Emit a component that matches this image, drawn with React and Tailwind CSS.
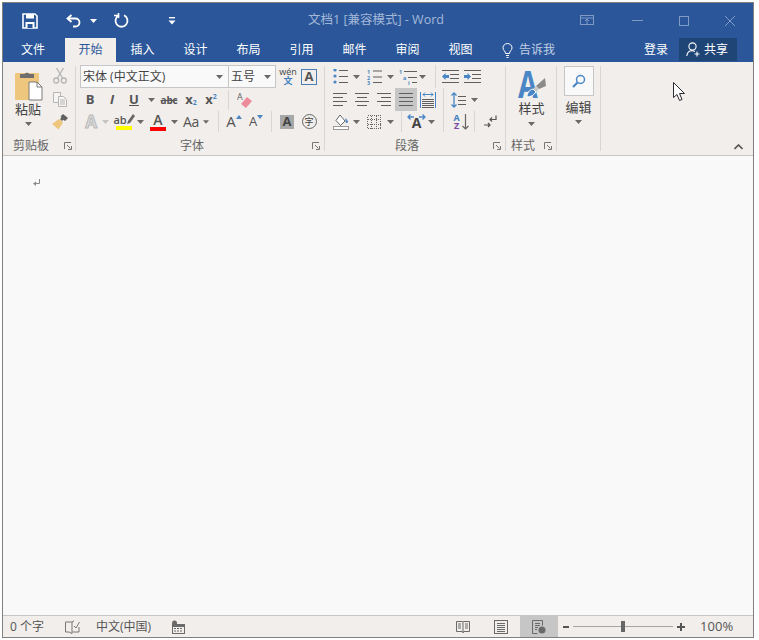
import React from "react";

const gray = "#5f5f5f";
const blue = "#4a86c5";

function Caret({ className = "", color = "#6a6a6a" }) {
  return (
    <span className={`flex shrink-0 items-center justify-center ${className}`}>
      <svg width="7" height="4" viewBox="0 0 7 4">
        <path d="M0 0h7L3.5 4z" fill={color} />
      </svg>
    </span>
  );
}

function Slot({ className = "", children }) {
  return <span className={`flex shrink-0 items-center justify-center ${className}`}>{children}</span>;
}

function VLine({ className = "" }) {
  return <span className={`w-px shrink-0 self-stretch bg-[#d8d6d4] ${className}`} />;
}

function Launcher({ className = "" }) {
  return (
    <svg className={`shrink-0 ${className}`} width="8" height="8" viewBox="0 0 8 8" fill="none" stroke="#777">
      <path d="M.5 7V.5H7" />
      <path d="M3 3l3.5 3.5M7.5 4v3.5H4" />
    </svg>
  );
}

function GroupLabel({ w, children, ml }) {
  return (
    <div className="flex h-[18px] items-center">
      <span className={`text-center text-[12px] text-[#666] ${w}`}>{children}</span>
      <Launcher className={ml} />
    </div>
  );
}

function Lines({ rows, w = 15, h = 13, stroke = gray }) {
  // rows: [x1, x2] pairs spaced evenly
  const step = rows.length > 1 ? (h - 1) / (rows.length - 1) : 0;
  return (
    <svg width={w} height={h} viewBox={`0 0 ${w} ${h}`}>
      {rows.map((r, i) => (
        <rect key={i} x={r[0]} y={Math.round(i * step)} width={r[1] - r[0]} height="1" fill={stroke} />
      ))}
    </svg>
  );
}

function SaveIcon() {
  return (
    <svg width="16" height="16" viewBox="0 0 16 16" fill="none">
      <path d="M1 1h12l2 2v12H1z" stroke="#fff" strokeWidth="1.6" />
      <rect x="4" y="1" width="8" height="4.5" fill="#fff" />
      <rect x="3.5" y="9" width="9" height="6" fill="#fff" />
      <rect x="5.5" y="11" width="5" height="4" fill="#2b579a" />
    </svg>
  );
}

function UndoIcon() {
  return (
    <svg width="15" height="14" viewBox="0 0 15 14" fill="none" stroke="#fff" strokeWidth="1.8">
      <path d="M5.5 1L1.5 4.5 5.5 8" />
      <path d="M2 4.5h7.5a3.8 3.8 0 0 1 0 8H7" />
    </svg>
  );
}

function RepeatIcon() {
  return (
    <svg width="15" height="15" viewBox="0 0 15 15" fill="none" stroke="#fff" strokeWidth="1.8">
      <path d="M10 2.3a6 6 0 1 1-5 0" />
      <path d="M4.5 0v5M4.5 2.5H0" strokeWidth="1.6" />
    </svg>
  );
}

function TitleBar() {
  const dim = "#7f9bc6";
  return (
    <div className="flex h-[35px] shrink-0 items-center bg-[#2b579a] pl-[19px] pr-[18px]">
      <SaveIcon />
      <span className="ml-[28px] flex"><UndoIcon /></span>
      <Caret className="ml-[9px]" color="#fff" />
      <span className="ml-[17px] flex"><RepeatIcon /></span>
      <svg className="ml-[39px]" width="8" height="8" viewBox="0 0 8 8" fill="#fff">
        <rect x="1" y="0" width="6" height="1.4" />
        <path d="M.5 3.5h7L4 7.5z" />
      </svg>
      <span className="ml-[132px] text-[12.5px] text-[#a3b8d8]">文档1 [兼容模式] - Word</span>
      <div className="ml-auto flex items-center">
        <svg width="14" height="11" viewBox="0 0 14 11" fill="none" stroke={dim}>
          <rect x=".5" y=".5" width="13" height="9" />
          <path d="M.5 3h13M7 9V4.5M5 6l2-2 2 2" />
        </svg>
        <svg className="ml-[38px]" width="11" height="1" viewBox="0 0 11 1">
          <rect width="11" height="1" fill={dim} />
        </svg>
        <svg className="ml-[36px]" width="10" height="10" viewBox="0 0 10 10" fill="none" stroke={dim}>
          <rect x=".5" y=".5" width="9" height="9" />
        </svg>
        <svg className="ml-[36px]" width="10" height="10" viewBox="0 0 10 10" fill="none" stroke={dim}>
          <path d="M0 0l10 10M10 0L0 10" />
        </svg>
      </div>
    </div>
  );
}

function TabBar() {
  const tabs = ["插入", "设计", "布局", "引用", "邮件", "审阅", "视图"];
  return (
    <div className="flex h-[24px] shrink-0 items-center bg-[#2b579a] text-[12px] text-white">
      <span className="w-[62px] pl-[18px]">文件</span>
      <span className="flex h-[24px] w-[51px] items-center justify-center bg-[#f1eeeb] text-[#2b579a]">开始</span>
      {tabs.map((t) => (
        <span key={t} className="w-[53px] text-center">{t}</span>
      ))}
      <svg className="ml-[15px]" width="11" height="15" viewBox="0 0 11 15" fill="none" stroke="#fff">
        <path d="M3.5 10.5C3.5 8 1 7.5 1 4.8a4.5 4.3 0 0 1 9 0c0 2.7-2.5 3.2-2.5 5.7z" />
        <path d="M4 12.5h3M4.5 14.5h2" />
      </svg>
      <span className="ml-[6px] text-[#c3d0e4]">告诉我</span>
      <span className="ml-[89px]">登录</span>
      <span className="ml-[11px] flex h-[23px] w-[58px] items-center self-start bg-[#1f4577] pl-[7px]">
        <svg width="15" height="15" viewBox="0 0 15 15" fill="none" stroke="#fff" strokeWidth="1.1">
          <circle cx="6.5" cy="4.5" r="3.6" />
          <path d="M.8 14c.3-3.2 2.6-5.2 5.2-5.2 1.2 0 2 .3 2.8.8" />
          <path d="M11 9.5v5M8.5 12h5" />
        </svg>
        <span className="ml-[3px]">共享</span>
      </span>
    </div>
  );
}

function ClipboardGroup() {
  return (
    <div className="flex w-[72px] shrink-0 flex-col">
      <div className="flex flex-1">
        <div className="flex w-[50px] flex-col items-center pt-[8px]">
          <svg width="29" height="31" viewBox="0 0 29 31">
            <rect x="1" y="3" width="24" height="27" rx="1" fill="#efc67e" />
            <path d="M6 4h4.5a3 3 0 0 1 5 0H20v4H6z" fill="#6e6e6e" />
            <path d="M15 12h8l5 5v13H15z" fill="#fff" stroke="#7a7a7a" />
            <path d="M23 12v5h5" fill="none" stroke="#7a7a7a" />
          </svg>
          <span className="mt-[-1px] text-[13px] leading-[18px] text-[#444]">粘贴</span>
          <Caret className="mt-[4px]" />
        </div>
        <div className="flex w-[14px] flex-col items-center pt-[6px]">
          <svg width="14" height="16" viewBox="0 0 14 16" fill="none" stroke="#b5b5b5" strokeWidth="1.3">
            <circle cx="3.2" cy="12.5" r="2.5" />
            <circle cx="10.8" cy="12.5" r="2.5" />
            <path d="M4.5 10L10.5 0M9.5 10L3.5 0" />
          </svg>
          <svg className="mt-[8px]" width="15" height="15" viewBox="0 0 15 15" fill="#f6f5f3" stroke="#b5b5b5">
            <path d="M.5.5h7v10h-7z" />
            <path d="M5.5 4.5h5l3 3v7h-8z" />
            <path d="M7 8h5M7 10h5M7 12h5" />
          </svg>
          <svg className="mt-[7px] shrink-0" width="16" height="16" viewBox="0 0 16 16">
            <path d="M11 0l5 4-3 3-1.500-1.200L10 7 8 5l1.500-1.500L8.500 2.500z" fill="#5f5f5f" />
            <path d="M7 5l4 3.500L6.500 15.500 0 10z" fill="#efc67e" />
          </svg>
        </div>
      </div>
      <GroupLabel w="w-[56px]" ml="ml-[5px]">剪贴板</GroupLabel>
    </div>
  );
}

function LetterA({ className = "", children = "A" }) {
  return <span className={`leading-none ${className}`}>{children}</span>;
}

function FontGroup() {
  return (
    <div className="flex w-[248px] shrink-0 flex-col">
      <div className="flex-1 pl-[4px] pt-[3px]">
        <div className="flex h-[23px] items-center">
          <div className="flex h-[23px] w-[149px] items-center justify-between border border-[#c6c6c6] bg-[#f9f9f9] pl-[2px] pr-[5px] text-[12px] text-[#444]">
            <span>宋体 (中文正文)</span>
            <Caret />
          </div>
          <div className="flex h-[23px] w-[47px] items-center justify-between border border-l-0 border-[#c6c6c6] bg-[#f9f9f9] pl-[2px] pr-[4px] text-[12px] text-[#444]">
            <span>五号</span>
            <Caret />
          </div>
          <span className="ml-[4px] flex w-[16px] flex-col items-center text-[9px] leading-[8px]">
            <span className="text-[#444]">wén</span>
            <span className="mt-[1px] font-bold text-[#3f7fbf]">文</span>
          </span>
          <span className="ml-[5px] flex h-[16px] w-[16px] items-center justify-center border border-[#4a7eb5] text-[13px] font-bold text-[#555]">A</span>
        </div>
        <div className="mt-[2px] flex h-[20px] items-center text-[#555]">
          <Slot className="w-[20px] text-[13px] font-bold">B</Slot>
          <Slot className="w-[24px] text-[13px] font-bold italic">I</Slot>
          <Slot className="w-[20px] text-[13px] font-bold underline">U</Slot>
          <Caret className="w-[14px]" />
          <Slot className="w-[22px] text-[10px] font-bold tracking-tight line-through">abc</Slot>
          <Slot className="w-[22px] text-[13px] font-bold">x<span className="mt-[6px] text-[7px] text-[#4a86c5]">2</span></Slot>
          <Slot className="w-[18px] text-[13px] font-bold">x<span className="mb-[6px] text-[7px] text-[#4a86c5]">2</span></Slot>
          <VLine className="ml-[8px]" />
          <Slot className="w-[32px]">
            <svg width="16" height="20" viewBox="0 -2 16 20">
              <text x="0" y="8" fontSize="9" fill="#666" fontFamily="Open Sans">A</text>
              <path d="M10 5l5 4-6 7-5-4z" fill="#ec8c9a" />
            </svg>
          </Slot>
        </div>
        <div className="mt-[1px] flex h-[21px] items-center text-[#555]">
          <Slot className="ml-[1px] w-[20px]">
            <LetterA className="text-[17px] font-bold text-[#dcdcdc] [-webkit-text-stroke:1px_#b8b8b8]" />
          </Slot>
          <Caret className="w-[8px]" color="#c4c4c4" />
          <Slot className="ml-[3px] w-[24px] flex-col">
            <span className="flex h-[12px] items-center text-[11px] font-semibold leading-none">ab<svg width="8" height="10" viewBox="0 0 8 10"><path d="M6 0l2 2-5 7-3 1 1-3z" fill="#666" /></svg></span>
            <span className="mt-[1px] h-[4px] w-[16px] bg-[#ffff00]" />
          </Slot>
          <Caret className="w-[8px]" />
          <Slot className="ml-[2px] w-[24px] flex-col">
            <LetterA className="h-[12px] text-[14px] font-semibold" />
            <span className="mt-[2px] h-[4px] w-[16px] bg-[#ff0000]" />
          </Slot>
          <Caret className="w-[8px]" />
          <Slot className="ml-px w-[24px] text-[14px] tracking-tight">Aa</Slot>
          <Caret className="w-[6px]" />
          <VLine className="ml-[9px]" />
          <Slot className="ml-[5px] w-[20px]">
            <LetterA className="text-[15px] font-medium" />
            <span className="mb-[9px] h-0 w-0 border-x-[3px] border-b-[4px] border-x-transparent border-b-[#4a86c5]" />
          </Slot>
          <Slot className="ml-[2px] w-[20px]">
            <LetterA className="text-[13px] font-medium" />
            <span className="mb-[9px] h-0 w-0 border-x-[3px] border-t-[4px] border-x-transparent border-t-[#4a86c5]" />
          </Slot>
          <VLine className="ml-[5px]" />
          <Slot className="ml-[4px] w-[22px]">
            <span className="flex h-[14px] w-[14px] items-center justify-center bg-[#a8a8a8] text-[13px] font-bold text-[#444]">A</span>
          </Slot>
          <Slot className="w-[22px]">
            <span className="flex h-[15px] w-[15px] items-center justify-center rounded-full border border-[#666] text-[9px] text-[#444]">字</span>
          </Slot>
        </div>
      </div>
      <GroupLabel w="w-[232px]" ml="ml-[4px]">字体</GroupLabel>
    </div>
  );
}

function Bullets() {
  return (
    <svg width="15" height="15" viewBox="0 0 15 15">
      {[1, 7, 13].map((y) => (
        <g key={y}>
          <circle cx="2" cy={y} r="1.6" fill={blue} />
          <rect x="6" y={y} width="9" height="1" fill={gray} />
        </g>
      ))}
    </svg>
  );
}

function Numbered() {
  return (
    <svg width="15" height="20" viewBox="0 -2 15 20">
      {[["1", 4.5], ["2", 10.5], ["3", 16]].map(([n, y]) => (
        <g key={n}>
          <text x="0" y={y} fontSize="5.5" fontWeight="700" fill={blue} fontFamily="Open Sans">{n}</text>
          <rect x="6" y={y - 3} width="9" height="1" fill={gray} />
        </g>
      ))}
    </svg>
  );
}

function Multilevel() {
  return (
    <svg width="18" height="20" viewBox="0 -2 18 20">
      <text x="0" y="5" fontSize="5.5" fontWeight="700" fill={blue} fontFamily="Open Sans">1</text>
      <rect x="5" y="2" width="13" height="1" fill={gray} />
      <text x="4" y="10.5" fontSize="5.5" fontWeight="700" fill={blue} fontFamily="Open Sans">a</text>
      <rect x="9" y="8" width="9" height="1" fill={gray} />
      <text x="9" y="16" fontSize="5.5" fontWeight="700" fill={blue} fontFamily="Open Sans">i</text>
      <rect x="13" y="13" width="5" height="1" fill={gray} />
    </svg>
  );
}

function Indent({ increase }) {
  return (
    <svg width="17" height="13" viewBox="0 0 17 13">
      <rect x="0" y="0" width="17" height="1" fill={gray} />
      <rect x="8" y="4" width="9" height="1" fill={gray} />
      <rect x="8" y="8" width="9" height="1" fill={gray} />
      <rect x="0" y="12" width="17" height="1" fill={gray} />
      {increase ? (
        <path d="M0 5h3.500V3L7 6.500 3.500 10V8H0z" fill={blue} />
      ) : (
        <path d="M7 5H3.500V3L0 6.500 3.500 10V8H7z" fill={blue} />
      )}
    </svg>
  );
}

function ParagraphGroup() {
  return (
    <div className="flex w-[180px] shrink-0 flex-col">
      <div className="flex-1 pl-[7px] pt-[3px]">
        <div className="flex h-[23px] items-center">
          <Slot className="w-[16px]"><Bullets /></Slot>
          <Caret className="ml-[4px] w-[8px]" />
          <Slot className="ml-[6px] w-[16px]"><Numbered /></Slot>
          <Caret className="ml-[4px] w-[8px]" />
          <Slot className="ml-[5px] w-[18px]"><Multilevel /></Slot>
          <Caret className="ml-px w-[8px]" />
          <VLine className="ml-[9px]" />
          <Slot className="ml-[5px] w-[18px]"><Indent /></Slot>
          <Slot className="ml-[4px] w-[18px]"><Indent increase /></Slot>
        </div>
        <div className="flex h-[23px] items-center">
          <Slot className="w-[16px]"><Lines rows={[[0, 14], [0, 10], [0, 14], [0, 10]]} w={14} h={13} /></Slot>
          <Slot className="ml-[6px] w-[16px]"><Lines rows={[[0, 14], [2, 12], [0, 14], [2, 12]]} w={14} h={13} /></Slot>
          <Slot className="ml-[6px] w-[16px]"><Lines rows={[[0, 14], [4, 14], [0, 14], [4, 14]]} w={14} h={13} /></Slot>
          <Slot className="ml-[3px] h-[23px] w-[22px] bg-[#c6c6c6]"><Lines rows={[[0, 14], [0, 14], [0, 14], [0, 14]]} w={14} h={13} /></Slot>
          <Slot className="ml-[2px] w-[18px]">
            <svg width="16" height="16" viewBox="0 0 16 16" fill="none">
              <path d="M.5 0v16M15.500 0v16" stroke={blue} />
              <path d="M3 2.500h10M3 2.500l2-2M3 2.500l2 2M13 2.500l-2-2M13 2.500l-2 2" stroke={blue} />
              <path d="M2 7.500h12M2 9.500h12M2 11.500h12M2 13.500h12M2 15.500h12" stroke={gray} />
            </svg>
          </Slot>
          <VLine className="ml-[6px]" />
          <Slot className="ml-[6px] w-[17px]">
            <svg width="15" height="16" viewBox="0 0 15 16" fill="none">
              <path d="M3 1v14M.5 3.500L3 1l2.500 2.500M.5 12.500L3 15l2.500-2.500" stroke={blue} strokeWidth="1.300" />
              <path d="M7 4.500h8M7 8.500h8M7 12.500h8" stroke={gray} />
            </svg>
          </Slot>
          <Caret className="ml-[3px] w-[8px]" />
        </div>
        <div className="flex h-[21px] items-center">
          <Slot className="w-[17px]">
            <svg width="16" height="16" viewBox="0 0 16 16" fill="none">
              <path d="M7 1l5 6-4.500 4.500L3 6.500z" stroke="#666" fill="#fff" />
              <path d="M12.500 4c1.500 1.500 2.500 3 2.500 4a1.300 1.300 0 0 1-2.500 0z" fill={blue} />
              <rect x=".5" y="12.500" width="15" height="3" stroke="#999" fill="#fff" />
            </svg>
          </Slot>
          <Caret className="ml-[3px] w-[8px]" />
          <Slot className="ml-[6px] w-[16px]">
            <svg width="14" height="14" viewBox="0 0 14 14" fill="none" stroke="#666" strokeDasharray="1 1" shapeRendering="crispEdges">
              <rect x=".5" y=".5" width="13" height="13" />
              <path d="M.5 4.500h13M.5 9.500h13M4.500 .5v13M9.500 .5v13" />
            </svg>
          </Slot>
          <Caret className="ml-[4px] w-[8px]" />
          <VLine className="ml-[7px]" />
          <Slot className="ml-[5px] w-[19px] flex-col">
            <svg width="19" height="6" viewBox="0 0 19 6" fill="none" stroke={blue} strokeWidth="1.300">
              <path d="M1 3h6M3.500.5L1 3l2.500 2.500M18 3h-6M15.500.5L18 3l-2.500 2.500" />
            </svg>
            <span className="mt-[-3px] text-[14px] font-bold leading-[12px] text-[#444]">A</span>
          </Slot>
          <Caret className="ml-px w-[8px]" />
          <VLine className="ml-[8px]" />
          <Slot className="ml-[7px] w-[20px]">
            <span className="flex flex-col items-center text-[9px] font-bold leading-[8px]">
              <span className="text-[#3f7fbf]">A</span>
              <span className="text-[#7a4fa3]">Z</span>
            </span>
            <svg className="ml-[2px]" width="7" height="16" viewBox="0 0 7 16" fill="none" stroke="#666" strokeWidth="1.200">
              <path d="M3.500 0v15M.5 12l3 3 3-3" />
            </svg>
          </Slot>
          <VLine className="ml-[3px]" />
          <Slot className="ml-[8px] w-[14px]">
            <svg width="13" height="13" viewBox="0 0 13 13" fill="none" stroke="#555" strokeWidth="1.200">
              <path d="M12 .5v4H6M8 2.500L6 4.500l2 2M0 10h6M4 8l2 2-2 2" />
            </svg>
          </Slot>
        </div>
      </div>
      <GroupLabel w="w-[164px]" ml="ml-[4px]">段落</GroupLabel>
    </div>
  );
}

function StyleGroup() {
  return (
    <div className="flex w-[50px] shrink-0 flex-col">
      <div className="flex flex-1 flex-col items-center pl-[1px] pt-[6px]">
        <span className="relative block h-[30px] w-[28px]">
          <span className="block origin-left scale-x-[0.75] text-[38px] font-bold leading-[30px] text-[#4a86c5]">A</span>
          <svg className="absolute left-0 top-0" width="28" height="30" viewBox="0 0 28 30">
            <path d="M27 10l1 8-7 3-3-3z" fill="#8a8a8a" />
            <path d="M18 18l3 3-3 3-3-3z" fill="#c8c8c8" />
            <path d="M15 21l3 3c-2 3-5 5-9 5 0-4 2-7 6-8z" fill="#4a86c5" stroke="#fff" />
          </svg>
        </span>
        <span className="mt-[1px] text-[13px] leading-[18px] text-[#444]">样式</span>
        <Caret className="mt-[5px]" />
      </div>
      <GroupLabel w="w-[34px]" ml="ml-[4px]">样式</GroupLabel>
    </div>
  );
}

function EditGroup() {
  return (
    <div className="flex w-[43px] shrink-0 flex-col items-center pt-[4px]">
      <span className="flex h-[30px] w-[30px] items-center justify-center border border-[#c6c6c6] bg-[#f9f9f9]">
        <svg width="14" height="14" viewBox="0 0 14 14" fill="none" stroke={blue}>
          <circle cx="8.500" cy="5.500" r="4" strokeWidth="1.500" />
          <path d="M5.500 8.500L1 13" strokeWidth="2.200" />
        </svg>
      </span>
      <span className="mt-[2px] text-[13px] leading-[18px] text-[#444]">编辑</span>
      <Caret className="mt-[4px]" />
    </div>
  );
}

function Ribbon() {
  return (
    <div className="flex h-[94px] shrink-0 border-b border-[#c6c6c6] bg-[#f1eeeb]">
      <ClipboardGroup />
      <VLine className="my-[4px]" />
      <FontGroup />
      <VLine className="my-[4px]" />
      <ParagraphGroup />
      <VLine className="my-[4px]" />
      <StyleGroup />
      <VLine className="my-[4px]" />
      <EditGroup />
      <VLine className="my-[4px]" />
      <svg className="ml-auto mb-[5px] mr-[10px] self-end" width="9" height="6" viewBox="0 0 9 6" fill="none" stroke="#555" strokeWidth="1.600">
        <path d="M.5 5l4-4 4 4" />
      </svg>
    </div>
  );
}

function StatusBar() {
  return (
    <div className="flex h-[22px] shrink-0 items-center border-t border-[#c6c6c6] bg-[#f1eeeb] pl-[7px] text-[12px] text-[#555]">
      <span className="w-[35px] whitespace-nowrap">0 个字</span>
      <svg className="ml-[20px]" width="15" height="14" viewBox="0 0 15 14" fill="none" stroke="#777">
        <path d="M7 2H.5v10H4l3 1.500V2C8 1.500 8 1 9 1" />
        <path d="M7.500 12H14V7M9 6l2 2 3.500-6" />
      </svg>
      <span className="ml-[16px]">中文(中国)</span>
      <svg className="ml-[20px]" width="14" height="14" viewBox="0 0 14 14">
        <circle cx="3.500" cy="3" r="2.500" fill="#6a6a6a" />
        <rect x="1" y="4" width="13" height="10" fill="#6a6a6a" />
        <rect x="2" y="7" width="11" height="6" fill="#f1eeeb" />
        <path d="M3 8h2v1H3zM6 8h2v1H6zM9 8h2v1H9zM3 10.500h2v1H3zM6 10.500h2v1H6zM9 10.500h2v1H9z" fill="#6a6a6a" />
      </svg>
      <svg className="ml-[271px]" width="14" height="14" viewBox="0 0 14 14" fill="none" stroke="#6a6a6a">
        <path d="M.5 1.500h6l.5.5.500-.5h6v10h-6L7 13l-.5-1.500h-6zM7 2v9" />
        <path d="M2 4h3M2 6h3M2 8h3M9 4h3M9 6h3M9 8h3" />
      </svg>
      <svg className="ml-[24px]" width="14" height="14" viewBox="0 0 14 14" fill="none" stroke="#6a6a6a">
        <rect x=".5" y=".5" width="13" height="13" />
        <path d="M3 3.500h8M3 5.500h8M3 7.500h8M3 9.500h8M3 11.500h8" />
      </svg>
      <span className="ml-[12px] flex h-[21px] w-[38px] items-center justify-center bg-[#c6c6c6]">
        <svg width="14" height="14" viewBox="0 0 14 14" fill="none" stroke="#6a6a6a">
          <path d="M5.500 13.500H.5V.5h10v5" />
          <path d="M3 3.500h5M3 5.500h5M3 7.500h3M3 9.500h2" />
          <circle cx="10" cy="10" r="3.500" fill="#6a6a6a" stroke="none" />
        </svg>
      </span>
      <span className="ml-[5px] h-[2px] w-[6px] bg-[#555]" />
      <span className="relative ml-[4px] h-px w-[100px] bg-[#a5a5a5]">
        <span className="absolute left-[48px] top-[-5px] h-[11px] w-[4px] bg-[#666]" />
      </span>
      <svg className="ml-[4px]" width="8" height="8" viewBox="0 0 8 8">
        <path d="M3 0h2v3h3v2H5v3H3V5H0V3h3z" fill="#555" />
      </svg>
      <span className="ml-[15px] text-[13px]">100%</span>
    </div>
  );
}

export default function App() {
  return (
    <div className="relative h-[640px] w-[759px] overflow-hidden bg-white pl-[2px] pt-[2px] font-['Open_Sans','Noto_Sans_CJK_SC',sans-serif]">
      <div className="flex h-[636px] w-[752px] flex-col border border-[#7f7f7f]">
        <TitleBar />
        <TabBar />
        <Ribbon />
        <div className="flex-1 bg-[#f9f9f9] pl-[30px] pt-[23px]">
          <svg width="7" height="8" viewBox="0 0 7 8" fill="none">
            <path d="M6.500 0v4.500H2" stroke="#888" />
            <path d="M3 2.500v4.500L0 4.500z" fill="#888" />
          </svg>
        </div>
        <StatusBar />
      </div>
      {/* mouse pointer sits over the ribbon */}
      <svg className="absolute left-[673px] top-[82px]" width="13" height="20" viewBox="0 0 13 20">
        <path d="M.5.5v15l3.500-3 2.500 6 2.500-1-2.500-6h5z" fill="#fff" stroke="#2a2a33" />
      </svg>
    </div>
  );
}
